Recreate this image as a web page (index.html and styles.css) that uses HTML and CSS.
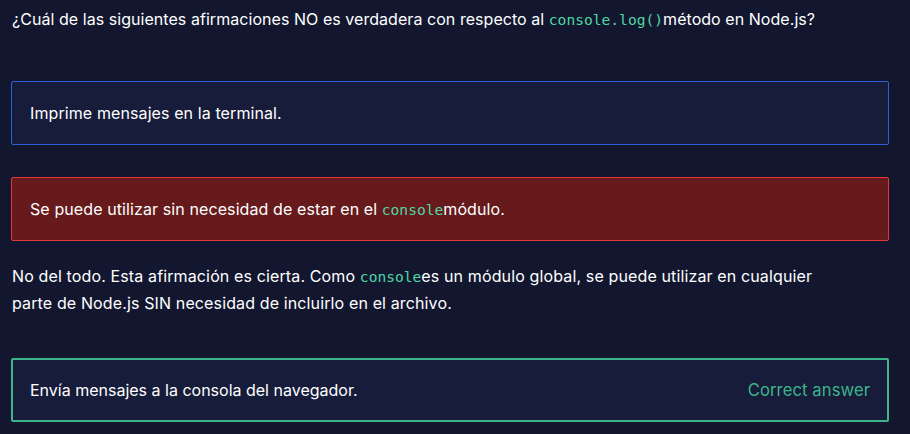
FILE: index.html
```html
<!DOCTYPE html>
<html lang="es">
<head>
<meta charset="utf-8">
<link rel="stylesheet" href="styles.css">
</head>
<body>
<div class="quiz">
  <p class="question">¿Cuál de las siguientes afirmaciones NO es verdadera con respecto al <code>console.log()</code>método en Node.js?</p>
  <div class="options">
    <div class="option option-selected">
      <span class="option-text">Imprime mensajes en la terminal.</span>
    </div>
    <div class="option option-wrong">
      <span class="option-text">Se puede utilizar sin necesidad de estar en el <code>console</code>módulo.</span>
    </div>
    <p class="feedback">No del todo. Esta afirmación es cierta. Como <code>console</code>es un módulo global, se puede utilizar en cualquier parte de Node.js SIN necesidad de incluirlo en el archivo.</p>
    <div class="option option-correct">
      <span class="option-text">Envía mensajes a la consola del navegador.</span>
      <span class="option-label">Correct answer</span>
    </div>
  </div>
</div>
</body>
</html>
```
FILE: styles.css
```css
html, body {
  margin: 0;
  padding: 0;
  background: #12172f;
  height: 100%;
}
body {
  font-family: "Inter", "Liberation Sans", sans-serif;
  color: #ffffff;
  font-size: 16px;
  letter-spacing: 0.1px;
}
.quiz {
  padding: 6px 21px 0 11px;
}
.question {
  margin: 0 0 48px 1px;
  line-height: 26px;
  letter-spacing: 0.05px;
}
code {
  font-family: "DejaVu Sans Mono", monospace;
  font-size: 14.6px;
  letter-spacing: 0;
  color: #4fd6a3;
}
.options {
  display: flex;
  flex-direction: column;
}
.option {
  display: flex;
  align-items: center;
  justify-content: space-between;
  height: 64px;
  box-sizing: border-box;
  padding: 0 18px 0 18px;
  border-radius: 2px;
  background: #161c3a;
  margin-bottom: 32px;
}
.option-selected {
  border: 1px solid #2f5fd4;
}
.option-wrong {
  border: 1px solid #e5383b;
  background: #661a1c;
  margin-bottom: 22px;
}
.option-correct {
  border: 2px solid #3bb68a;
  padding: 0 17px;
}
.option-correct .option-text {
  letter-spacing: 0;
}
.option-label {
  color: #3bb68a;
  font-size: 16.6px;
}
.feedback {
  margin: 0 0 42px 1px;
  line-height: 26px;
  max-width: 815px;
  letter-spacing: 0.13px;
}
```
